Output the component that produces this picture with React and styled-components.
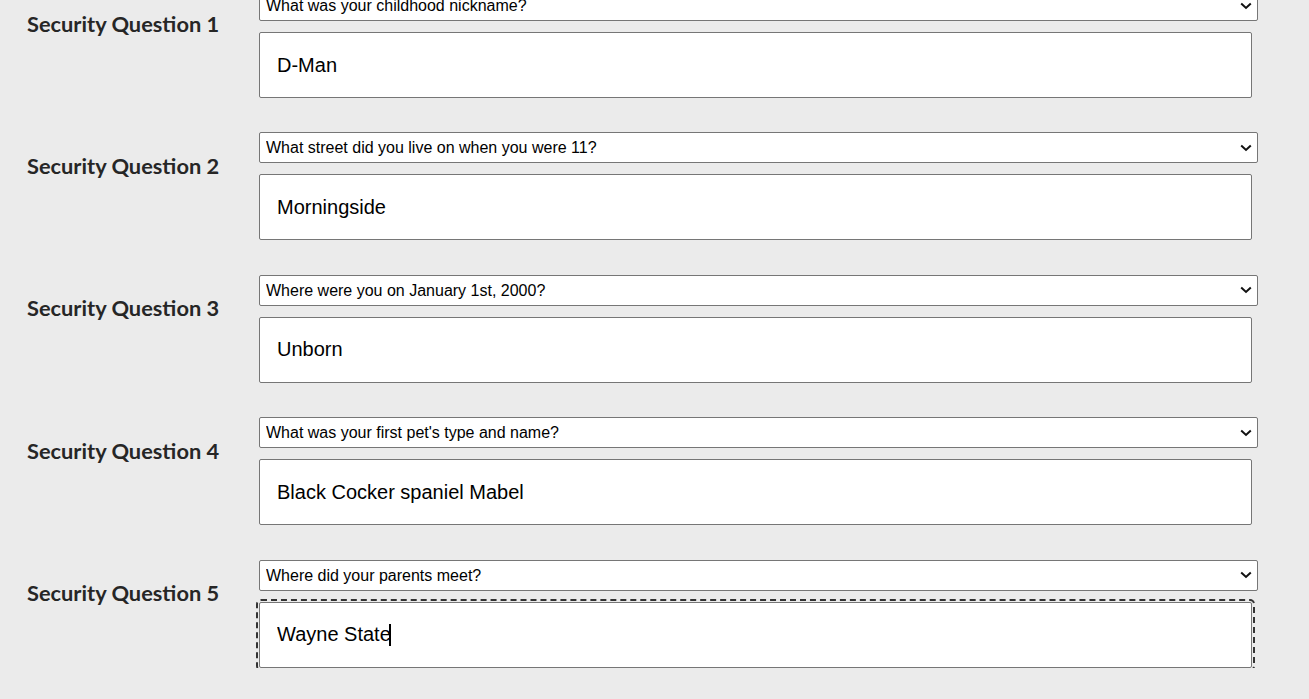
import React, { useLayoutEffect, useState } from "react";
import styled, { createGlobalStyle } from "styled-components";

const Global = createGlobalStyle`
  html, body { margin: 0; padding: 0; background: #ebebeb; }
  body { overflow: hidden; }
`;

const Page = styled.div`
  padding: 0 0 0 27px;
  margin-top: -10px;
  display: flex;
  flex-direction: column;
  gap: 34.4px;
`;

const Row = styled.div`
  display: grid;
  grid-template-columns: 232px 999px;
  align-items: start;
`;

const Label = styled.label`
  font-family: Lato, "Open Sans", sans-serif;
  font-weight: 700;
  font-size: 21.8px;
  line-height: 24px;
  color: #262626;
  margin-top: 21.5px;
`;

const Fields = styled.div`
  display: flex;
  flex-direction: column;
  gap: 11px;
`;

const SelectWrap = styled.div`
  position: relative;
  width: 999px;
  height: 31px;
`;

const Select = styled.select`
  appearance: none;
  -webkit-appearance: none;
  box-sizing: border-box;
  width: 100%;
  height: 31px;
  border: 1px solid #767676;
  border-radius: 2px;
  background: #fff;
  color: #000;
  font-family: Arial, "Liberation Sans", sans-serif;
  font-size: 16px;
  padding: 0 30px 0 6px;
  margin: 0;
  outline: none;
`;

const Chevron = styled.svg`
  position: absolute;
  right: 6px;
  top: 50%;
  width: 12px;
  height: 8px;
  margin-top: -4px;
  pointer-events: none;
`;

const InputWrap = styled.div`
  position: relative;
  width: 993px;
  height: 66px;
`;

const Input = styled.input`
  box-sizing: border-box;
  width: 100%;
  height: 66px;
  border: 1px solid #767676;
  border-radius: 2px;
  background: #fff;
  color: #000;
  font-family: Arial, "Liberation Sans", sans-serif;
  font-size: 20px;
  padding: 0 17px;
  margin: 0;
  caret-color: ${(p) => (p.$fakeCaret ? "transparent" : "#000")};
  &:focus {
    outline: 2px dashed #333;
    outline-offset: 1px;
  }
`;

const Caret = styled.span`
  position: absolute;
  top: 22px;
  width: 2px;
  height: 22px;
  background: #000;
  pointer-events: none;
`;

const questions = [
  ["What was your childhood nickname?", "D-Man"],
  ["What street did you live on when you were 11?", "Morningside"],
  ["Where were you on January 1st, 2000?", "Unborn"],
  ["What was your first pet's type and name?", "Black Cocker spaniel Mabel"],
  ["Where did your parents meet?", "Wayne State"],
];

function AnswerField({ value, focused }) {
  const [caretX, setCaretX] = useState(null);
  useLayoutEffect(() => {
    if (!focused) return;
    const c = document.createElement("canvas").getContext("2d");
    c.font = '20px Arial, "Liberation Sans", sans-serif';
    setCaretX(16.5 + c.measureText(value).width);
  }, [focused, value]);
  return (
    <InputWrap>
      <Input
        type="text"
        defaultValue={value}
        autoFocus={focused}
        $fakeCaret={focused}
      />
      {focused && caretX !== null && <Caret style={{ left: caretX }} />}
    </InputWrap>
  );
}

export default function App() {
  return (
    <>
      <Global />
      <Page>
        {questions.map(([q, a], i) => (
          <Row key={i}>
            <Label>Security Question {i + 1}</Label>
            <Fields>
              <SelectWrap>
                <Select defaultValue={q}>
                  <option>{q}</option>
                </Select>
                <Chevron viewBox="0 0 12 8" aria-hidden="true">
                  <path
                    d="M1.2 1.5 L6 6 L10.8 1.5"
                    fill="none"
                    stroke="#111"
                    strokeWidth="2"
                  />
                </Chevron>
              </SelectWrap>
              <AnswerField value={a} focused={i === 4} />
            </Fields>
          </Row>
        ))}
      </Page>
    </>
  );
}
